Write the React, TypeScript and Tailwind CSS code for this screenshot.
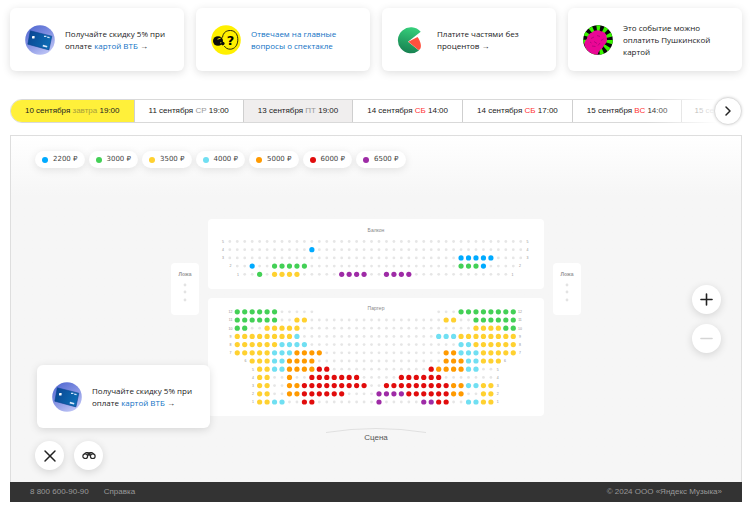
import type { ReactNode } from "react";
import { ChevronRight, Minus, Plus, X } from "lucide-react";
import clsx from "clsx";

type Session = { date: string; day?: string; time?: string; tone?: "active" | "muted" | "weekend" };

const sessions: Session[] = [
  { date: "10 сентября", day: "завтра", time: "19:00", tone: "active" },
  { date: "11 сентября", day: "СР", time: "19:00" },
  { date: "13 сентября", day: "ПТ", time: "19:00", tone: "muted" },
  { date: "14 сентября", day: "СБ", time: "14:00", tone: "weekend" },
  { date: "14 сентября", day: "СБ", time: "17:00", tone: "weekend" },
  { date: "15 сентября", day: "ВС", time: "14:00", tone: "weekend" },
  { date: "15 сентября" },
];

const seatColors: Record<string, string> = {
  b: "#00aaff",
  g: "#43d056",
  y: "#ffd130",
  c: "#70dff2",
  o: "#ff9a00",
  r: "#e10c0c",
  p: "#9e2ba6",
};

const prices = [
  { code: "b", value: "2200 ₽" },
  { code: "g", value: "3000 ₽" },
  { code: "y", value: "3500 ₽" },
  { code: "c", value: "4000 ₽" },
  { code: "o", value: "5000 ₽" },
  { code: "r", value: "6000 ₽" },
  { code: "p", value: "6500 ₽" },
];

// Each row is run-length encoded: price code + count, "." is a sold seat, "_" is an empty place.
type Row = { label: string; start: number; seats: string };

const balcony: Row[] = [
  { label: "5", start: 0, seats: ".40" },
  { label: "4", start: 0, seats: ".11 b1 .28" },
  { label: "3", start: 0, seats: ".31 b5 .4" },
  { label: "2", start: 1, seats: ".2 b1 .2 g5 .20 g3 b1 .4" },
  { label: "1", start: 2, seats: ".2 g1 .1 y4 .5 p4 .2 p4 .13" },
];

const parterre: Row[] = [
  { label: "12", start: 1, seats: "g6 .5 _16 .3 g8" },
  { label: "11", start: 1, seats: "g6 .2 y2 .18 y2 .2 g6" },
  { label: "10", start: 1, seats: "g2 .2 y5 .23 y4 g2" },
  { label: "9", start: 1, seats: "y8 c1 .18 c3 y8" },
  { label: "8", start: 1, seats: "y6 c4 .20 c2 y6" },
  { label: "7", start: 1, seats: "y5 c3 o4 .16 o2 c3 y5" },
  { label: "6", start: 3, seats: "y3 c2 o4 .17 o3 c2 y3" },
  { label: "5", start: 4, seats: "y2 c2 o4 r2 .13 r1 o4 c2 .2" },
  { label: "4", start: 4, seats: "y2 .2 o1 .2 r7 .5 r6 .7" },
  { label: "3", start: 4, seats: "y2 .2 o2 r9 .2 r9 o2 c2 y2" },
  { label: "2", start: 4, seats: "y2 .2 o2 r6 .4 p4 r6 o2 .2 y2" },
  { label: "1", start: 4, seats: "y2 c2 .2 r2 .8 p1 .5 p2 r2 .2 c2 y2" },
];

const expand = (seats: string) =>
  seats
    .split(" ")
    .map((run) => run[0].repeat(Number(run.slice(1))))
    .join("");

function Seats({ rows, name, height, top }: { rows: Row[]; name: string; height: number; top: number }) {
  const colX = (i: number) => 21.8 + i * 7.46;
  const rowY = (i: number) => top + i * 8.2;
  return (
    <svg viewBox={`0 0 336 ${height}`} className="block w-full" role="img" aria-label={name}>
      {rows.map((row, r) => {
        const codes = expand(row.seats);
        return (
          <g key={row.label}>
            {[row.start - 0.9, row.start + codes.length - 0.1].map((col) => (
              <text
                key={col}
                x={colX(col)}
                y={rowY(r) + 1.3}
                textAnchor="middle"
                fontSize="3.5"
                fontFamily="Liberation Sans, sans-serif"
                fill="#8f8f8f"
              >
                {row.label}
              </text>
            ))}
            {codes.split("").map((code, i) =>
              code === "_" ? null : (
                <circle
                  key={i}
                  cx={colX(row.start + i)}
                  cy={rowY(r)}
                  r={code === "." ? 1.4 : 2.6}
                  fill={seatColors[code] ?? "#e6e6e6"}
                />
              ),
            )}
          </g>
        );
      })}
    </svg>
  );
}

function Box() {
  return (
    <div className="mt-11 flex h-[52px] w-7 flex-col items-center rounded-sm bg-white pt-2">
      <span className="text-[5px] leading-[6px] font-bold text-[#999]">Ложа</span>
      <svg viewBox="0 0 6 22" className="mt-1 w-[6px]" aria-hidden="true">
        {[4, 11, 19].map((y) => (
          <circle key={y} cx="3" cy={y} r="1.4" fill="#e3e3e3" />
        ))}
      </svg>
    </div>
  );
}

function CardIcon() {
  return (
    <svg viewBox="0 0 30 30" className="size-[30px] shrink-0" aria-hidden="true">
      <defs>
        <linearGradient id="vtb-bg" x1="0" y1="0" x2="0.6" y2="1">
          <stop offset="0" stopColor="#4a62cf" />
          <stop offset="0.5" stopColor="#7d8ce0" />
          <stop offset="1" stopColor="#b9c0f4" />
        </linearGradient>
        <linearGradient id="vtb-card" x1="0" y1="0" x2="1" y2="0.4">
          <stop offset="0" stopColor="#0a4390" />
          <stop offset="1" stopColor="#0d6cb4" />
        </linearGradient>
      </defs>
      <circle cx="15" cy="15" r="14.8" fill="url(#vtb-bg)" />
      <path d="M5.3 5.8 26.8 11.2 23.9 24.9 2.8 19.2Z" fill="url(#vtb-card)" stroke="#0a4390" strokeWidth="0.6" strokeLinejoin="round" />
      <rect x="7" y="11" width="2.6" height="2.4" rx="0.4" fill="#fff" />
      <path d="M19 11.3h2.4M22.2 12.1l2.4.6" stroke="#cfe2fa" strokeWidth="1.2" />
      <path d="M17.8 20.6l4.4 1.1" stroke="#dbe9fb" strokeWidth="1.6" />
    </svg>
  );
}

function FaqIcon() {
  return (
    <svg viewBox="0 0 30 30" className="size-[30px] shrink-0" aria-hidden="true">
      <circle cx="15" cy="15" r="14.8" fill="#fff000" />
      <ellipse cx="7" cy="16" rx="5" ry="4.8" fill="#0b0b0b" />
      <path d="M6.5 14.2l3.2-1M9.2 17.8h3" stroke="#fff000" strokeWidth="0.9" />
      <path
        d="M11.5 12.5C12 7.5 15.5 5.4 19.5 5.5c5 .2 7.6 4.5 7.3 9.8-.3 5.2-3.2 8.8-7.6 8.9-2.7 0-4.7-1.2-5.9-3.2"
        fill="none"
        stroke="#111"
        strokeWidth="0.9"
      />
      <circle cx="11.8" cy="18.6" r="1.8" fill="#0b0b0b" />
      <text x="19.5" y="19.5" textAnchor="middle" fontSize="13" fontWeight="900" fontFamily="DejaVu Sans, sans-serif" fill="#000">
        ?
      </text>
    </svg>
  );
}

function SplitIcon() {
  return (
    <svg viewBox="0 0 30 30" className="size-[30px] shrink-0" aria-hidden="true">
      <defs>
        <linearGradient id="split-bg" x1="0.6" y1="0" x2="0.4" y2="1">
          <stop offset="0" stopColor="#36cf7b" />
          <stop offset="1" stopColor="#177f50" />
        </linearGradient>
      </defs>
      <path d="M23.7 6.8A13 13 0 1 0 22 25.5L11 16.7Z" fill="url(#split-bg)" />
      <path d="M11.3 16.7 20.5 12C23 15.500 24.6 20 23.6 23Q23 24.8 21.5 25Z" fill="#ff503e" />
    </svg>
  );
}

function PushkinIcon() {
  return (
    <svg viewBox="0 0 30 30" className="size-[30px] shrink-0" aria-hidden="true">
      <circle cx="15" cy="15" r="14.8" fill="#080808" />
      <circle cx="15" cy="15" r="11" fill="none" stroke="#38f500" strokeWidth="7.6" strokeDasharray="3.14 3.14" />
      <path
        d="M1.5 20c-.5-2.5.7-4.5 2.3-6C4.3 10.500 6.5 8.2 9 7.500c2-2.600 6.500-3 9-1.300 3.500.3 6 3.300 5.700 6.500 1 3-.5 6-2.700 7.500-.7 2.500-3 4-4.800 5.800-.9 1.600-1.200 2.700-1.700 3.800C8 29.500 3 25.500 1.500 20Z"
        fill="#ea0795"
      />
      <path d="M8 13.500l3-1.500M14 10.500l3 1M18 15.500l2.500-1.500M11 16.500l3 2M9 21l3.500.5M15 20.500l2-2.500M7 17l1.500 1" stroke="#b0067a" strokeWidth="0.9" fill="none" />
    </svg>
  );
}

function BinocularsIcon() {
  return (
    <svg viewBox="0 0 16 12" className="w-[14px]" fill="none" stroke="#2b2b2b" strokeWidth="1.4" aria-hidden="true">
      <circle cx="3.7" cy="7" r="2.7" />
      <circle cx="12.3" cy="7" r="2.7" />
      <path d="M2.6 4.3 4.8 3h2.3v3.5M13.4 4.3 11.2 3H8.900v3.500" />
      <path d="M6.4 4.6h3.2" strokeWidth="3" />
    </svg>
  );
}

function PromoCard({ icon, children }: { icon: ReactNode; children: ReactNode }) {
  return (
    <article className="flex h-[63px] items-center gap-[10px] rounded-md bg-white pr-2 pl-[15px] font-['Open_Sans',sans-serif] text-[8px] leading-[12px] text-[#222] shadow-[0_2px_9px_rgba(0,0,0,0.13)]">
      {icon}
      <p>{children}</p>
    </article>
  );
}

function VtbCard() {
  return (
    <PromoCard icon={<CardIcon />}>
      Получайте скидку 5% при
      <br />
      оплате{" "}
      <a href="#vtb" className="text-[#1272c4]">
        картой ВТБ
      </a>{" "}
      →
    </PromoCard>
  );
}

function RoundButton({ label, disabled, children }: { label: string; disabled?: boolean; children: ReactNode }) {
  return (
    <button
      type="button"
      aria-label={label}
      disabled={disabled}
      className="flex size-[29px] items-center justify-center rounded-full bg-white text-[#222] shadow-[0_2px_9px_rgba(0,0,0,0.14)] disabled:text-[#d5d5d5]"
    >
      {children}
    </button>
  );
}

export default function App() {
  return (
    <div className="bg-white px-[10px] pt-2 pb-2 font-['Liberation_Sans',sans-serif] text-[8px] text-[#222]">
      <section className="grid grid-cols-4 gap-3">
        <VtbCard />
        <PromoCard icon={<FaqIcon />}>
          <a href="#faq" className="text-[#1272c4]">
            Отвечаем на главные
            <br />
            вопросы о спектакле
          </a>
        </PromoCard>
        <PromoCard icon={<SplitIcon />}>
          Платите частями без
          <br />
          процентов →
        </PromoCard>
        <PromoCard icon={<PushkinIcon />}>
          Это событие можно
          <br />
          оплатить Пушкинской
          <br />
          картой
        </PromoCard>
      </section>

      <nav className="relative mt-7" aria-label="Сеансы">
        <div className="flex h-6 overflow-hidden rounded-l-full border border-[#d9d9d9]">
          {sessions.map((s, i) => (
            <button
              key={i}
              type="button"
              className={clsx(
                "shrink-0 border-r border-[#cfcfcf] px-[14px] whitespace-nowrap last:border-r-0 last:pr-0 last:pl-3",
                s.tone === "active" && "bg-[#fff03a]",
                s.tone === "muted" && "bg-[#f0eeee]",
              )}
            >
              {s.date}
              {s.day && (
                <>
                  {" "}
                  <span
                    className={clsx(
                      s.tone === "weekend" ? "text-[#f33]" : s.tone === "active" ? "text-[#a89f3c]" : "text-[#999]",
                    )}
                  >
                    {s.day}
                  </span>{" "}
                  {s.time}
                </>
              )}
            </button>
          ))}
        </div>
        <div className="absolute inset-y-0 right-0 w-24 bg-linear-to-r from-white/0 to-white to-75%" />
        <button
          type="button"
          aria-label="Следующие даты"
          className="absolute -top-[2px] right-0 flex size-7 items-center justify-center rounded-full border border-[#ddd] bg-white shadow-[0_0_3px_rgba(0,0,0,0.15)]"
        >
          <ChevronRight size={16} strokeWidth={2.25} />
        </button>
      </nav>

      <main className="relative mt-3 border border-b-0 border-[#dedede] bg-[#f6f6f6] bg-linear-to-b from-white to-[#f6f6f6] to-[60px] pb-[39px]">
        <div className="flex flex-wrap gap-1 px-6 pt-[15px]">
          {prices.map((p) => (
            <button
              key={p.code}
              type="button"
              className="flex h-[17px] items-center gap-[5px] rounded-full bg-white px-[7px] font-['DejaVu_Sans',sans-serif] text-[7px] text-[#444] shadow-[0_2px_8px_rgba(0,0,0,0.1)]"
            >
              <span className="size-[6px] rounded-full" style={{ backgroundColor: seatColors[p.code] }} />
              {p.value}
            </button>
          ))}
        </div>

        <div className="mt-[51px] flex items-start justify-center gap-[9px]">
          <Box />
          <div className="flex w-[336px] flex-col gap-[9px]">
            <section className="relative rounded-sm bg-white">
              <h2 className="absolute inset-x-0 top-2 text-center text-[5px] leading-[6px] text-[#888]">Балкон</h2>
              <Seats rows={balcony} name="Балкон" height={70} top={22.5} />
            </section>
            <section className="relative rounded-sm bg-white">
              <h2 className="absolute inset-x-0 top-[7px] text-center text-[5px] leading-[6px] text-[#888]">Партер</h2>
              <Seats rows={parterre} name="Партер" height={118} top={13.8} />
            </section>
          </div>
          <Box />
        </div>

        <div className="mt-3 flex flex-col items-center">
          <svg viewBox="0 0 102 5" className="w-[102px]" fill="none" aria-hidden="true">
            <path d="M1 4.5Q51-3.5 101 4.5" stroke="#e0e0e0" />
          </svg>
          <span className="leading-[10px] text-[#555]">Сцена</span>
        </div>

        <div className="absolute bottom-[54px] left-[26px] w-[173px]">
          <VtbCard />
        </div>
        <div className="absolute bottom-3 left-6 flex gap-[10px]">
          <RoundButton label="Закрыть">
            <X size={20} strokeWidth={1.75} />
          </RoundButton>
          <RoundButton label="Вид со сцены">
            <BinocularsIcon />
          </RoundButton>
        </div>
        <div className="absolute right-5 bottom-[129px] flex flex-col gap-[10px]">
          <RoundButton label="Приблизить">
            <Plus size={19} strokeWidth={2} />
          </RoundButton>
          <RoundButton label="Отдалить" disabled>
            <Minus size={19} strokeWidth={2} />
          </RoundButton>
        </div>
      </main>

      <footer className="flex h-5 items-center gap-[15px] bg-[#333] px-5 text-[#999]">
        <a href="tel:88006009090">8 800 600-90-90</a>
        <a href="#help">Справка</a>
        <span className="ml-auto">© 2024 ООО «Яндекс Музыка»</span>
      </footer>
    </div>
  );
}
